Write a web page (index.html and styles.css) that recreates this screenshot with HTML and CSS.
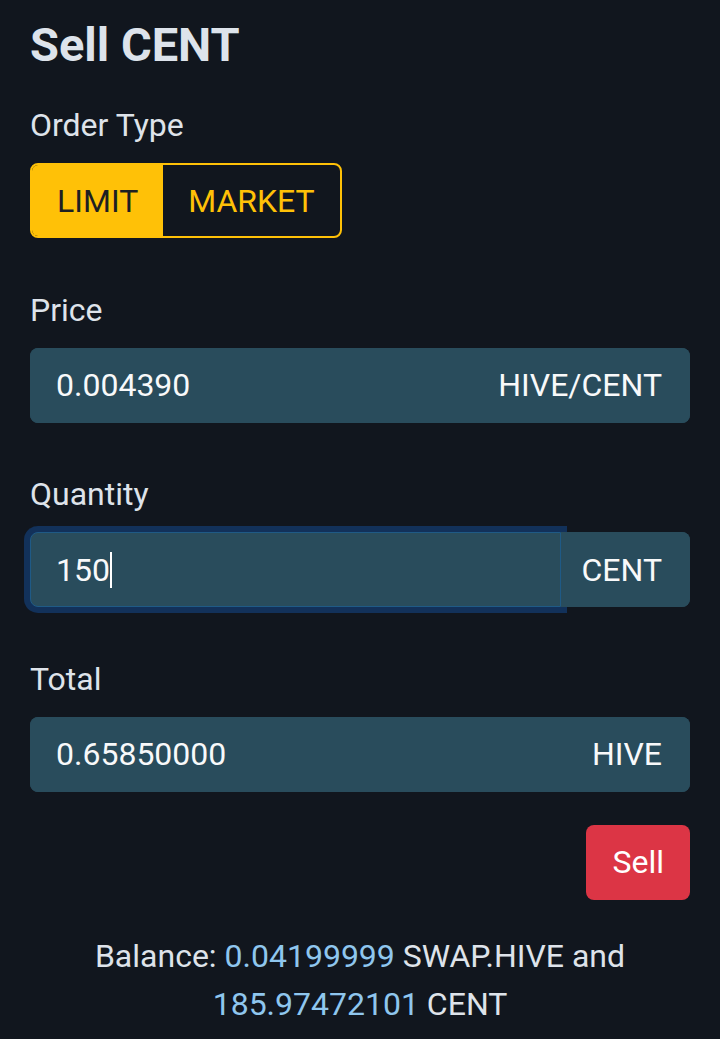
FILE: index.html
```
<!DOCTYPE html>
<html lang="en">

<head>
  <meta charset="UTF-8">
  <meta name="viewport" content="width=device-width, initial-scale=1.0">
  <title>Sell CENT</title>
  <link rel="stylesheet" href="styles.css">
</head>

<body>
  <div class="sell_panel">
    <h2 class="title">Sell CENT</h2>

    <div class="field">
      <p class="label">Order Type</p>
      <div class="toggle">
        <button class="toggle_btn active">LIMIT</button>
        <button class="toggle_btn">MARKET</button>
      </div>
    </div>

    <div class="field">
      <label class="label" for="price">Price</label>
      <div class="input_group">
        <input id="price" class="field_input" type="text" value="0.004390">
        <span class="addon">HIVE/CENT</span>
      </div>
    </div>

    <div class="field">
      <label class="label" for="quantity">Quantity</label>
      <div class="input_group">
        <input id="quantity" class="field_input focused" type="text" value="150">
        <span class="caret" aria-hidden="true"></span>
        <span class="addon">CENT</span>
      </div>
    </div>

    <div class="field last">
      <label class="label" for="total">Total</label>
      <div class="input_group">
        <input id="total" class="field_input" type="text" value="0.65850000" readonly>
        <span class="addon">HIVE</span>
      </div>
    </div>

    <div class="actions">
      <button class="sell_btn">Sell</button>
    </div>

    <p class="balance">
      Balance: <a href="#" class="amount">0.04199999</a> SWAP.HIVE and
      <a href="#" class="amount">185.97472101</a> CENT
    </p>
  </div>
</body>

</html>
```

FILE: styles.css
```
* {
  box-sizing: border-box;
}

body {
  margin: 0;
  background: #11161e;
  color: #dee3ea;
  font-family: Roboto, "Liberation Sans", sans-serif;
  font-size: 32px;
  line-height: 1.5;
}

.sell_panel {
  padding: 0 30px;
}

.title {
  margin: 17px 0 28px;
  font-size: 47px;
  font-weight: bold;
  line-height: 1.2;
  color: #dde3eb;
}

.field {
  margin-bottom: 47.5px;
}

.field.last {
  margin-bottom: 33px;
}

.label {
  display: block;
  margin: 0 0 14px;
  color: #dee3ea;
}

.toggle {
  display: inline-flex;
  height: 75px;
  border: 2px solid #ffc107;
  border-radius: 8px;
  overflow: hidden;
}

.toggle_btn {
  font: inherit;
  border: none;
  background: transparent;
  color: #ffc107;
  padding: 0 25px;
}

.toggle_btn.active {
  background: #ffc107;
  color: #1e1f22;
}

.input_group {
  display: flex;
  height: 75px;
  background: #294c5c;
  border-radius: 8px;
  position: relative;
}

.field_input {
  flex: 1;
  min-width: 0;
  font: inherit;
  color: #f8f9fa;
  background: #294c5c;
  border: 1px solid #294c5c;
  border-radius: 8px 0 0 8px;
  padding: 0 25px;
  outline: none;
}

.field_input.focused {
  border-color: #1f5a86;
  box-shadow: 0 0 0 6px #12315a;
}

/* 入力中のキャレット */
.caret {
  position: absolute;
  left: 80px;
  top: 20px;
  width: 2px;
  height: 36px;
  background: #ffffff;
}

.addon {
  display: flex;
  align-items: center;
  padding: 0 28px 0 21px;
  color: #f8f9fa;
  background: #294c5c;
  border-radius: 0 8px 8px 0;
  position: relative;
}

.actions {
  display: flex;
  justify-content: flex-end;
}

.sell_btn {
  font: inherit;
  height: 75px;
  padding: 0 26px;
  border: none;
  border-radius: 8px;
  background: #dc3545;
  color: #ffffff;
}

.balance {
  margin: 32px 0 0;
  text-align: center;
  line-height: 48px;
}

.amount {
  color: #8fc6ee;
  text-decoration: none;
}
```
